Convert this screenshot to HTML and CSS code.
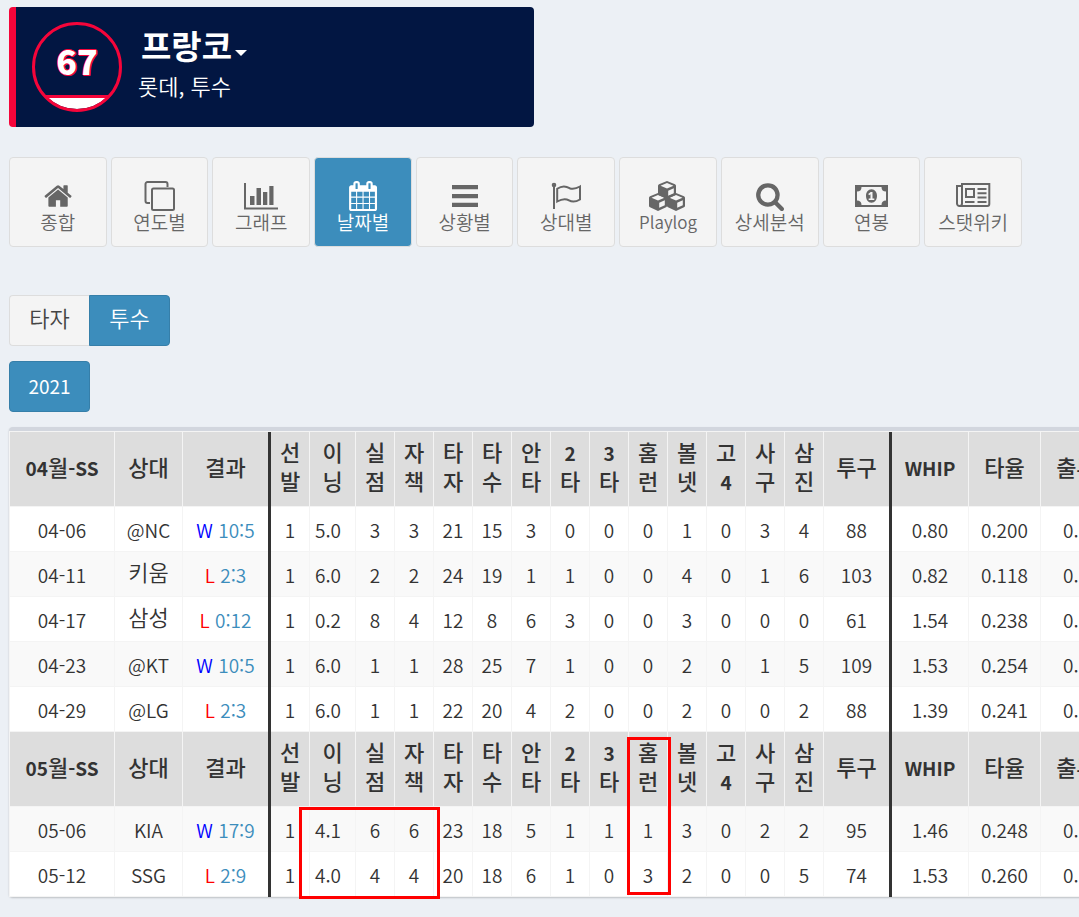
FILE: index.html
```html
<!DOCTYPE html>
<html lang="ko">
<head>
<meta charset="utf-8">
<meta name="viewport" content="width=device-width, initial-scale=1">
<title>프랑코 - 날짜별 기록</title>
<link rel="stylesheet" href="styles.css">
</head>
<body>
<header class="player">
  <div class="badge">
    <svg class="badge-ring" viewBox="0 0 90 90" aria-hidden="true">
      <path d="M15 75H75A43.500 43.500 0 0 1 15 75Z" fill="#fff"/>
      <path d="M14 74.500H76" stroke="#f5053a" stroke-width="3"/>
      <circle cx="45" cy="45" r="43.500" fill="none" stroke="#f5053a" stroke-width="3"/>
    </svg>
    <span class="badge-number">67</span>
  </div>
  <div class="player-info">
    <button class="player-name" type="button">프랑코<span class="caret"></span></button>
    <p class="player-team">롯데, 투수</p>
  </div>
</header>

<nav class="menu">
  <a class="menu-item" href="#total"><svg class="icon" viewBox="0 0 36 32"><path transform="translate(3 1) scale(.0168)" d="M1472 992v480q0 26-19 45t-45 19h-384v-384h-256v384h-384q-26 0-45-19t-19-45v-480q0-1 .5-3t.5-3l575-474 575 474q1 2 1 6zm223-69l-62 74q-8 9-21 11h-3q-13 0-21-7l-692-577-692 577q-12 8-24 7-13-2-21-11l-62-74q-8-10-7-23.500t11-21.500l719-599q32-26 76-26t76 26l244 204v-195q0-14 9-23t23-9h192q14 0 23 9t9 23v408l219 182q10 8 11 21.500t-7 23.500z"/></svg><span>종합</span></a>
  <a class="menu-item" href="#year"><svg class="icon line" viewBox="0 0 36 32"><path d="M8 23H5.500a2 2 0 0 1-2-2V4a2 2 0 0 1 2-2h18a2 2 0 0 1 2 2v3"/><rect x="10" y="8.500" width="22" height="21.500" rx="1.500"/></svg><span>연도별</span></a>
  <a class="menu-item" href="#graph"><svg class="icon" viewBox="0 0 36 32"><path d="M1 3h2v24.500h32v2H1zM7 16h4.500v9H7zM13.500 8H18v17h-4.500zM20 12h4.300v13H20zM26.300 6h4.200v19h-4.200z"/></svg><span>그래프</span></a>
  <a class="menu-item active" href="#date" aria-current="page"><svg class="icon" viewBox="0 0 36 32"><path transform="translate(3 1) scale(.0168)" d="M192 1664h288v-288h-288v288zm352 0h320v-288h-320v288zm-352-352h288v-320h-288v320zm352 0h320v-320h-320v320zm-352-384h288v-288h-288v288zm736 736h320v-288h-320v288zm-384-736h320v-288h-320v288zm768 736h288v-288h-288v288zm-384-352h320v-320h-320v320zm-352-864v-288q0-13-9.500-22.500t-22.500-9.500h-64q-13 0-22.500 9.500t-9.500 22.500v288q0 13 9.500 22.500t22.500 9.500h64q13 0 22.500-9.500t9.500-22.500zm736 864h288v-320h-288v320zm-384-384h320v-288h-320v288zm384 0h288v-288h-288v288zm32-480v-288q0-13-9.500-22.500t-22.500-9.500h-64q-13 0-22.500 9.500t-9.500 22.500v288q0 13 9.500 22.500t22.500 9.500h64q13 0 22.500-9.500t9.500-22.500zm384-64v1280q0 52-38 90t-90 38h-1408q-52 0-90-38t-38-90v-1280q0-52 38-90t90-38h128v-96q0-66 47-113t113-47h64q66 0 113 47t47 113v96h384v-96q0-66 47-113t113-47h64q66 0 113 47t47 113v96h128q52 0 90 38t38 90z"/></svg><span>날짜별</span></a>
  <a class="menu-item" href="#situation"><svg class="icon" viewBox="0 0 36 32"><path d="M5 5h26v4.300H5zM5 14h26v4.300H5zM5 22.700h26V27H5z"/></svg><span>상황별</span></a>
  <a class="menu-item" href="#opponent"><svg class="icon line" viewBox="0 0 36 32"><path d="M6 5v24"/><circle cx="6" cy="5" r="1.300"/><path d="M9.200 8.800C14 5.500 18 6 21.500 8.200 25 9.500 28.500 8.500 32 6.500V19.500C28 21.800 24.500 22.500 21 20.300 17 18 13.500 19 9.200 21.500Z"/></svg><span>상대별</span></a>
  <a class="menu-item" href="#playlog"><svg class="icon wide" viewBox="-1 0 39 32" fill-rule="evenodd"><path id="cube" d="M17 1l8 3.200q1 .5 1 1.500v8q0 1-1 1.500l-8 3.800-8-3.800q-1-.5-1-1.500v-8q0-1 1-1.500zM17 3l-6.500 2.700L17 8.500l6.500-2.800zM18.200 10.800v5l5.600-2.600V8.300z"/><use href="#cube" x="-9" y="12"/><use href="#cube" x="9" y="12"/></svg><span class="latin">Playlog</span></a>
  <a class="menu-item" href="#detail"><svg class="icon" viewBox="0 0 36 32"><path transform="translate(3 1) scale(.0168)" d="M1216 832q0-185-131.500-316.500t-316.500-131.500-316.500 131.500-131.500 316.500 131.500 316.500 316.500 131.500 316.500-131.500 131.500-316.500zm512 832q0 52-38 90t-90 38q-54 0-90-38l-343-342q-179 124-399 124-143 0-273.500-55.500t-225-150-150-225-55.500-273.500 55.500-273.500 150-225 225-150 273.500-55.500 273.500 55.500 225 150 150 225 55.500 273.500q0 220-124 399l343 343q37 37 37 90z"/></svg><span>상세분석</span></a>
  <a class="menu-item" href="#salary"><svg class="icon" viewBox="0 0 36 32" fill-rule="evenodd"><path d="M2 5h33v22H2zM8.500 7q0 4.500-4.500 4.500v9q4.500 0 4.500 4.500h20q0-4.500 4.500-4.500v-9q-4.500 0-4.500-4.500z"/><path d="M18.500 9.300c3.400 0 5.500 3 5.500 6.700s-2.100 6.700-5.500 6.700S13 19.700 13 16s2.100-6.700 5.500-6.700zM17.700 12l-2.500 2 1 1.200 1.300-1v4.300h-1.800V20h5.600v-1.500h-1.800V12z"/></svg><span>연봉</span></a>
  <a class="menu-item" href="#wiki"><svg class="icon line" viewBox="0 0 36 32"><path d="M6.500 6H2v17.500a2.500 2.500 0 0 0 5 0V4h27.300v20a2 2 0 0 1-2 2H4.500"/><rect x="11" y="9" width="8" height="8"/><path d="M22.500 9h9M22.500 13.200h9M22.500 17.500h9M10 22h9.500M22.500 22h9"/></svg><span>스탯위키</span></a>
</nav>

<div class="tabs">
  <button class="tab" type="button">타자</button><button class="tab active" type="button">투수</button>
</div>
<div class="years">
  <button class="tab year active" type="button">2021</button>
</div>

<main class="box">
  <table class="records">
    <colgroup>
      <col class="c-date"><col class="c-team"><col class="c-result"><col class="c-num"><col class="c-inning">
      <col class="c-num" span="12"><col class="c-pitch"><col class="c-whip"><col class="c-rate"><col class="c-last">
    </colgroup>
    <tbody>
      <tr class="head"><th><span class="num">04</span>월<span class="num">-SS</span></th><th>상대</th><th>결과</th><th>선<br>발</th><th>이<br>닝</th><th>실<br>점</th><th>자<br>책</th><th>타<br>자</th><th>타<br>수</th><th>안<br>타</th><th><span class="num">2</span><br>타</th><th><span class="num">3</span><br>타</th><th>홈<br>런</th><th>볼<br>넷</th><th>고<br><span class="num">4</span></th><th>사<br>구</th><th>삼<br>진</th><th>투구</th><th><span class="num">WHIP</span></th><th>타율</th><th>출루율</th></tr>
      <tr><td>04-06</td><td>@NC</td><td><span class="win">W</span> <a href="#g0406">10:5</a></td><td>1</td><td>5.0</td><td>3</td><td>3</td><td>21</td><td>15</td><td>3</td><td>0</td><td>0</td><td>0</td><td>1</td><td>0</td><td>3</td><td>4</td><td>88</td><td>0.80</td><td>0.200</td><td>0.</td></tr>
      <tr><td>04-11</td><td class="kr">키움</td><td><span class="loss">L</span> <a href="#g0411">2:3</a></td><td>1</td><td>6.0</td><td>2</td><td>2</td><td>24</td><td>19</td><td>1</td><td>1</td><td>0</td><td>0</td><td>4</td><td>0</td><td>1</td><td>6</td><td>103</td><td>0.82</td><td>0.118</td><td>0.</td></tr>
      <tr><td>04-17</td><td class="kr">삼성</td><td><span class="loss">L</span> <a href="#g0417">0:12</a></td><td>1</td><td>0.2</td><td>8</td><td>4</td><td>12</td><td>8</td><td>6</td><td>3</td><td>0</td><td>0</td><td>3</td><td>0</td><td>0</td><td>0</td><td>61</td><td>1.54</td><td>0.238</td><td>0.</td></tr>
      <tr><td>04-23</td><td>@KT</td><td><span class="win">W</span> <a href="#g0423">10:5</a></td><td>1</td><td>6.0</td><td>1</td><td>1</td><td>28</td><td>25</td><td>7</td><td>1</td><td>0</td><td>0</td><td>2</td><td>0</td><td>1</td><td>5</td><td>109</td><td>1.53</td><td>0.254</td><td>0.</td></tr>
      <tr><td>04-29</td><td>@LG</td><td><span class="loss">L</span> <a href="#g0429">2:3</a></td><td>1</td><td>6.0</td><td>1</td><td>1</td><td>22</td><td>20</td><td>4</td><td>2</td><td>0</td><td>0</td><td>2</td><td>0</td><td>0</td><td>2</td><td>88</td><td>1.39</td><td>0.241</td><td>0.</td></tr>
      <tr class="head"><th><span class="num">05</span>월<span class="num">-SS</span></th><th>상대</th><th>결과</th><th>선<br>발</th><th>이<br>닝</th><th>실<br>점</th><th>자<br>책</th><th>타<br>자</th><th>타<br>수</th><th>안<br>타</th><th><span class="num">2</span><br>타</th><th><span class="num">3</span><br>타</th><th>홈<br>런</th><th>볼<br>넷</th><th>고<br><span class="num">4</span></th><th>사<br>구</th><th>삼<br>진</th><th>투구</th><th><span class="num">WHIP</span></th><th>타율</th><th>출루율</th></tr>
      <tr><td>05-06</td><td>KIA</td><td><span class="win">W</span> <a href="#g0506">17:9</a></td><td>1</td><td>4.1</td><td>6</td><td>6</td><td>23</td><td>18</td><td>5</td><td>1</td><td>1</td><td>1</td><td>3</td><td>0</td><td>2</td><td>2</td><td>95</td><td>1.46</td><td>0.248</td><td>0.</td></tr>
      <tr><td>05-12</td><td>SSG</td><td><span class="loss">L</span> <a href="#g0512">2:9</a></td><td>1</td><td>4.0</td><td>4</td><td>4</td><td>20</td><td>18</td><td>6</td><td>1</td><td>0</td><td>3</td><td>2</td><td>0</td><td>0</td><td>5</td><td>74</td><td>1.53</td><td>0.260</td><td>0.</td></tr>
    </tbody>
  </table>
  <div class="mark mark-runs"></div>
  <div class="mark mark-homers"></div>
</main>
</body>
</html>
```

FILE: styles.css
```css
* {
  box-sizing: border-box;
}

body {
  margin: 0;
  padding: 7px 0 20px 9px;
  overflow-x: hidden;
  background: #ecf0f5;
  color: #333;
  font-family: "Noto Sans CJK KR", "Noto Sans", sans-serif;
  font-size: 19px;
  font-weight: 350;
  line-height: 30px;
}

a {
  color: #3c8dbc;
  text-decoration: none;
}

button {
  font: inherit;
  cursor: pointer;
}

.player {
  display: flex;
  align-items: center;
  gap: 16px;
  max-width: 525px;
  height: 120px;
  padding: 0 16px;
  border-left: 7px solid #f5053a;
  border-radius: 4px;
  background: #021642;
  color: #fff;
}

.badge {
  display: grid;
  place-items: center;
  flex: none;
}

.badge > * {
  grid-area: 1 / 1;
}

.badge-ring {
  width: 90px;
  height: 90px;
}

.badge-number {
  padding-bottom: 12px;
  font-size: 34px;
  font-weight: 900;
  text-shadow: 1px 0 #f5053a, -1px 0 #f5053a, 0 1px #f5053a, 0 -1px #f5053a, 1px 1px #f5053a;
}

.player-info {
  display: flex;
  flex-direction: column;
  align-items: flex-start;
  padding-bottom: 8px;
}

.player-name {
  display: flex;
  align-items: center;
  gap: 3px;
  padding: 0 3px;
  border: 0;
  background: none;
  color: #fff;
  font-size: 33px;
  font-weight: 700;
  line-height: 44px;
}

.caret {
  margin-top: 16px;
  border: 6px solid transparent;
  border-top-color: #fff;
  border-bottom: 0;
}

.player-team {
  margin: 0;
  font-size: 22px;
  line-height: 36px;
}

.menu {
  display: grid;
  grid-template-columns: repeat(10, 1fr);
  gap: 4px;
  max-width: 1013px;
  margin-top: 30px;
}

.menu-item {
  display: flex;
  flex-direction: column;
  align-items: center;
  height: 90px;
  padding-top: 22px;
  border: 1px solid #ddd;
  border-radius: 4px;
  background: #f4f4f4;
  color: #666;
  font-size: 19px;
  line-height: 20px;
  white-space: nowrap;
}

.menu-item.active {
  background: #3c8dbc;
  color: #fff;
}

.latin {
  font-size: 17px;
}

.icon {
  flex: none;
  width: 36px;
  height: 32px;
  fill: currentColor;
}

.icon.wide {
  width: 39px;
}

.icon.line {
  fill: none;
  stroke: currentColor;
  stroke-width: 2;
}

.tabs {
  display: flex;
  margin-top: 48px;
}

.years {
  display: flex;
  margin-top: 15px;
}

.tab {
  width: 81px;
  height: 51px;
  padding: 0 0 7px;
  border: 1px solid #ddd;
  border-radius: 4px;
  background: #f4f4f4;
  color: #444;
  font-size: 22px;
}

.tab.active {
  border-color: #367fa9;
  background: #3c8dbc;
  color: #fff;
}

.tabs .tab:first-child {
  width: 80px;
  border-right: 0;
  border-radius: 4px 0 0 4px;
}

.tabs .tab:last-child {
  border-radius: 0 4px 4px 0;
}

.tab.year {
  padding: 0 0 2px;
  font-size: 19px;
  font-weight: 400;
}

.box {
  position: relative;
  width: max-content;
  margin-top: 15px;
  border-top: 4px solid #d2d6de;
  border-radius: 4px;
  background: #fff;
  box-shadow: 0 1px 2px rgba(0, 0, 0, 0.2);
}

.records {
  width: 1124px;
  table-layout: fixed;
  border-spacing: 0;
  border: 1px solid #f4f4f4;
  border-width: 1px 0 0 1px;
}

.c-date { width: 105px; }
.c-team { width: 68px; }
.c-result { width: 88px; }
.c-num { width: 39px; }
.c-inning { width: 46px; }
.c-pitch { width: 68px; }
.c-whip { width: 77px; }
.c-rate { width: 72px; }
.c-last { width: 92px; }

.records th,
.records td {
  padding: 7px 0;
  background-image: linear-gradient(#f4f4f4, #f4f4f4);
  background-position: bottom;
  background-repeat: no-repeat;
  background-size: 100% 1px;
  border-right: 1px solid #f4f4f4;
  height: 45px;
  text-align: center;
  white-space: nowrap;
}

.records th {
  padding: 5px 0 12px;
  background-color: #ddd;
  font-size: 22px;
  font-weight: 500;
  line-height: 29px;
}

.records .num {
  font-size: 19px;
  font-weight: 700;
  line-height: 1;
}

.records .kr {
  padding: 4px 0 11px;
  font-size: 22px;
}

.records tr:nth-child(odd) td {
  background-color: #f9f9f9;
}

.records tr:nth-child(6) ~ tr:nth-child(odd) td {
  background-color: #fff;
}

.records tr:nth-child(6) ~ tr:nth-child(even) td {
  background-color: #f9f9f9;
}

.records tr > :nth-child(3),
.records tr > :nth-child(18) {
  border-right: 3px solid #333;
}

.records td:nth-child(5) {
  padding-right: 9px;
}

.records td:last-child {
  padding-left: 22px;
  text-align: left;
}

.win {
  color: #00f;
}

.loss {
  color: #f00;
}

.mark {
  position: absolute;
  border: 3px solid #f00;
}

.mark-runs {
  top: 376px;
  left: 290px;
  width: 141px;
  height: 92px;
}

.mark-homers {
  top: 306px;
  left: 618px;
  width: 44px;
  height: 158px;
}
```
